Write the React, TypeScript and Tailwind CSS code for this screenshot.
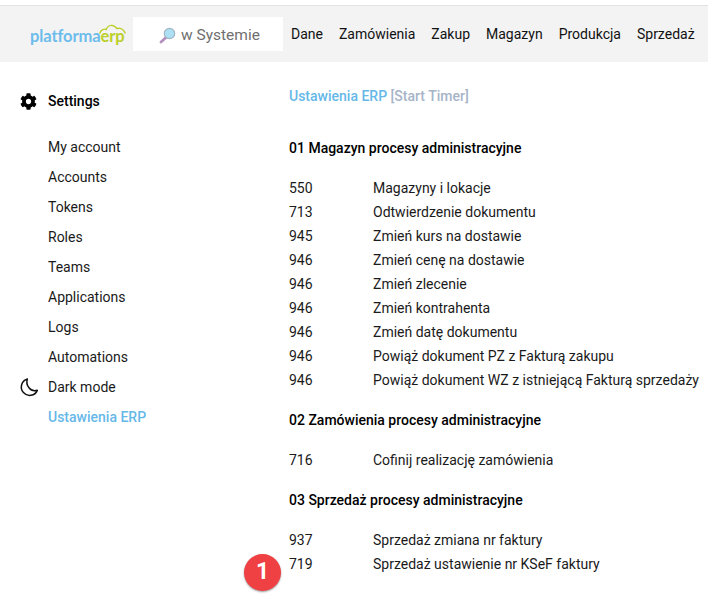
import React from "react";

const sideItems = ["My account", "Accounts", "Tokens", "Roles", "Teams", "Applications", "Logs", "Automations"];
const nav = ["Dane", "Zamówienia", "Zakup", "Magazyn", "Produkcja", "Sprzedaż"];

const Row = ({ n, t }: { n: string; t: string }) => (
  <div className="flex h-6 items-center">
    <span className="w-[84px] shrink-0">{n}</span>
    <span className="whitespace-nowrap">{t}</span>
  </div>
);

const Heading = ({ children }: { children: React.ReactNode }) => (
  <div className="h-6 flex items-center font-medium text-black whitespace-nowrap">{children}</div>
);

export default function App() {
  return (
    <div className="relative h-[595px] w-[708px] overflow-hidden bg-white text-[14px] text-[#1a1a1a] font-['Roboto',sans-serif]">
      <div className="h-[5px]" />
      <header className="flex h-[57px] items-center border-t border-[#e2e2e2] bg-[#f3f3f3] pl-[30px] whitespace-nowrap">
        <div className="relative flex h-[34px] w-[103px] shrink-0 items-end pb-[6px]">
          <span className="text-[16.5px] font-bold leading-[18px] tracking-[-0.1px] font-['Lato',sans-serif] text-[#6cbcec]">
            platforma<span className="text-[#bccf2a]">erp</span>
          </span>
          <svg className="absolute left-[69px] top-[7px]" width="27" height="11" viewBox="0 0 30 12" fill="none" stroke="#bccf2a" strokeWidth="1.6" strokeLinecap="round">
            <path d="M1 10 C2 6 6 5 8 6 C9 3 12 1 15 1.5 C18 2 19 4 20 5 C23 4 27 5 29 10" />
          </svg>
        </div>
        <div className="flex h-[34px] w-[150px] shrink-0 items-center bg-white pl-[26px] pt-[3px] text-[15.5px] text-[#6f6f6f]">
          <svg width="17" height="17" viewBox="0 0 17 17" className="mr-[5px] shrink-0">
            <path d="M7 10.5 L2 15" stroke="#b48fc0" strokeWidth="2.8" strokeLinecap="round" />
            <circle cx="10.5" cy="6.5" r="5.2" fill="#aee0f3" stroke="#9fb4c4" strokeWidth="1.2" />
          </svg>
          w Systemie
        </div>
        <nav className="ml-2 flex gap-4 text-[14px] text-[#111]">
          {nav.map((n) => (
            <span key={n}>{n}</span>
          ))}
        </nav>
      </header>

      <div className="flex">
        <aside className="w-[289px] shrink-0 pt-[24px]">
          <div className="flex h-[30px] items-center pl-5 font-medium text-black">
            <svg width="17" height="17" viewBox="0 0 512 512" fill="#000" className="mr-[11px] shrink-0">
              <path d="M487.4 315.7l-42.6-24.6c4.3-23.2 4.3-47 0-70.2l42.6-24.6c4.9-2.8 7.1-8.6 5.5-14-11.1-35.6-30-67.8-54.7-94.6-3.8-4.1-10-5.1-14.8-2.3L380.8 110c-17.9-15.4-38.5-27.3-60.8-35.1V25.8c0-5.6-3.9-10.5-9.4-11.7-36.7-8.2-74.3-7.8-109.2 0-5.5 1.2-9.4 6.1-9.4 11.7V75c-22.2 7.9-42.8 19.8-60.8 35.1L88.7 85.5c-4.9-2.8-11-1.9-14.8 2.3-24.7 26.7-43.6 58.9-54.7 94.6-1.7 5.4.6 11.2 5.5 14L67.3 221c-4.3 23.2-4.3 47 0 70.2l-42.6 24.6c-4.9 2.8-7.1 8.6-5.5 14 11.1 35.6 30 67.8 54.7 94.6 3.8 4.1 10 5.1 14.8 2.3l42.6-24.6c17.9 15.4 38.5 27.3 60.8 35.1v49.2c0 5.6 3.9 10.5 9.4 11.7 36.7 8.2 74.3 7.8 109.2 0 5.5-1.2 9.4-6.1 9.4-11.7v-49.2c22.2-7.9 42.8-19.8 60.8-35.1l42.6 24.6c4.9 2.8 11 1.9 14.8-2.3 24.7-26.7 43.6-58.9 54.7-94.6 1.5-5.5-.7-11.3-5.6-14.1zM256 336c-44.1 0-80-35.9-80-80s35.9-80 80-80 80 35.9 80 80-35.9 80-80 80z" />
            </svg>
            Settings
          </div>
          <div className="mt-[16px] flex flex-col">
            {sideItems.map((s) => (
              <div key={s} className="flex h-[30px] items-center pl-12">{s}</div>
            ))}
            <div className="flex h-[30px] items-center pl-5">
              <svg width="20" height="20" viewBox="0 0 24 24" fill="none" stroke="#111" strokeWidth="1.8" strokeLinecap="round" strokeLinejoin="round" className="-ml-[1px] mr-[9px] shrink-0">
                <path d="M10 2.5 A10 10 0 1 0 22 16 A9 9 0 0 1 12 13 A11 11 0 0 1 10 2.5 Z" />
              </svg>
              Dark mode
            </div>
            <div className="flex h-[30px] items-center pl-12 font-medium text-[#66b8e8]">Ustawienia ERP</div>
          </div>
        </aside>

        <main className="flex-1 pt-[22px]">
          <div className="flex h-6 items-center font-medium text-[#66b8e8] whitespace-nowrap">
            Ustawienia ERP&nbsp;<span className="text-[#a6b4c8]">[Start Timer]</span>
          </div>
          <div className="mt-[28px]"><Heading>01 Magazyn procesy administracyjne</Heading></div>
          <div className="mt-[16px]">
            <Row n="550" t="Magazyny i lokacje" />
            <Row n="713" t="Odtwierdzenie dokumentu" />
            <Row n="945" t="Zmień kurs na dostawie" />
            <Row n="946" t="Zmień cenę na dostawie" />
            <Row n="946" t="Zmień zlecenie" />
            <Row n="946" t="Zmień kontrahenta" />
            <Row n="946" t="Zmień datę dokumentu" />
            <Row n="946" t="Powiąż dokument PZ z Fakturą zakupu" />
            <Row n="946" t="Powiąż dokument WZ z istniejącą Fakturą sprzedaży" />
          </div>
          <div className="mt-[16px]"><Heading>02 Zamówienia procesy administracyjne</Heading></div>
          <div className="mt-[16px]">
            <Row n="716" t="Cofinij realizację zamówienia" />
          </div>
          <div className="mt-[16px]"><Heading>03 Sprzedaż procesy administracyjne</Heading></div>
          <div className="mt-[16px]">
            <Row n="937" t="Sprzedaż zmiana nr faktury" />
            <Row n="719" t="Sprzedaż ustawienie nr KSeF faktury" />
          </div>
        </main>
      </div>

      <div className="absolute left-[244px] top-[554px] flex h-[37px] w-[37px] items-center justify-center rounded-full bg-[#ef4044] text-[23px] font-bold text-white shadow-[0_1px_2px_rgba(0,0,0,0.4)]">
        1
      </div>
    </div>
  );
}
